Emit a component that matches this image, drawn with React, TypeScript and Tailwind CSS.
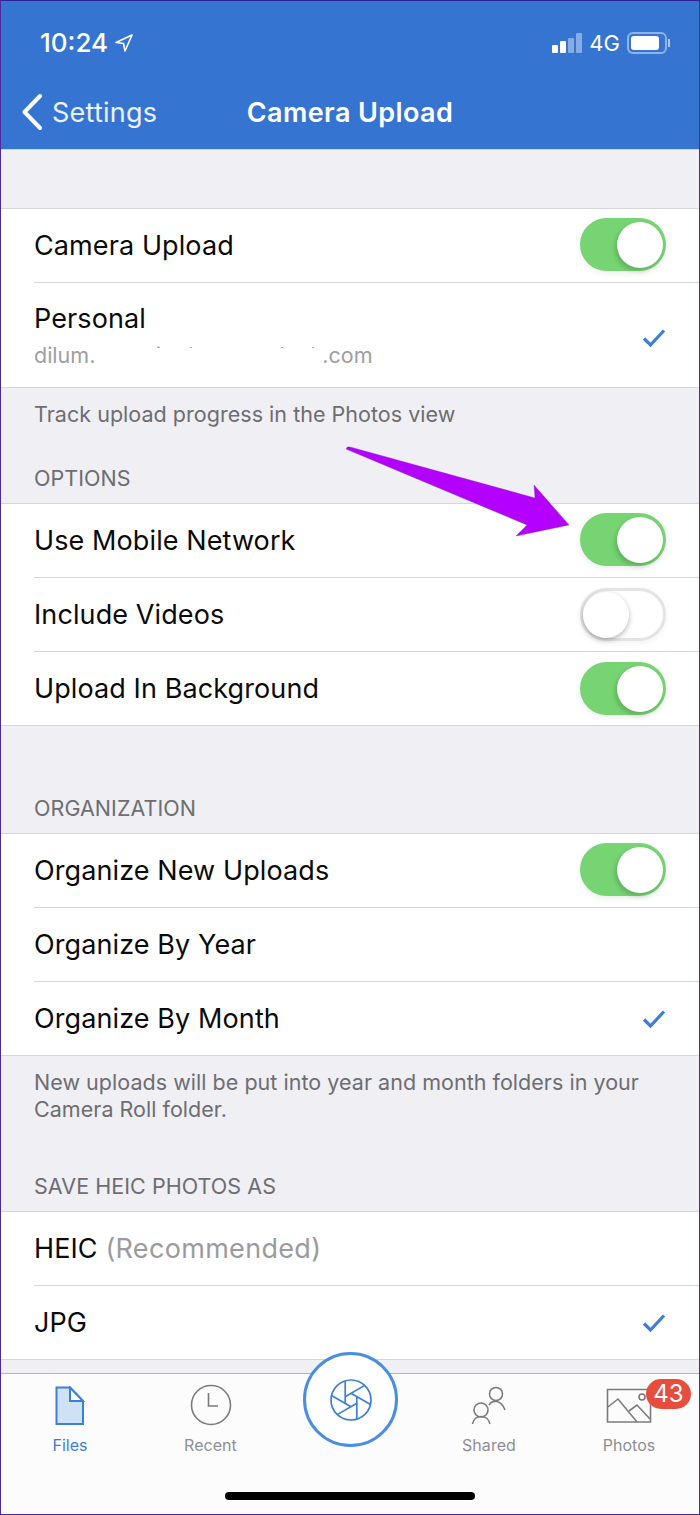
import type { ReactNode } from "react";

const FONT = "font-['Inter','Liberation_Sans',sans-serif]";

function Toggle({ on, lift }: { on: boolean; lift?: boolean }) {
  return (
    <div
      className={
        (lift ? "mb-[2px] " : "") +
        (on
          ? "w-[86px] h-[53px] rounded-full bg-[#76d572] flex items-center justify-end pr-[3px] shadow-[0_2px_6px_rgba(0,0,0,0.08)]"
          : "w-[86px] h-[53px] rounded-full bg-white border-[3px] border-[#e4e4e6] flex items-center justify-start shadow-[0_2px_6px_rgba(0,0,0,0.05)]")
      }
    >
      <div
        className={
          on
            ? "w-[46px] h-[46px] rounded-full bg-white shadow-[-2px_3px_5px_rgba(0,0,0,0.18)]"
            : "w-[46px] h-[46px] rounded-full bg-white shadow-[0_2px_5px_rgba(0,0,0,0.3)]"
        }
      />
    </div>
  );
}

function Check({ down }: { down?: boolean }) {
  return (
    <svg className={down ? "mt-[6px]" : ""} width="24" height="20" viewBox="0 0 24 20" fill="none">
      <path d="M2 10.5 L8.5 17 L22 2.5" stroke="#3b7fd9" strokeWidth="3.2" />
    </svg>
  );
}

function Row({ label, right, last }: { label: ReactNode; right?: ReactNode; last?: boolean }) {
  return (
    <div className="pl-[33px] bg-white">
      <div
        className={
          last
            ? "h-[73px] flex items-center justify-between pr-[33px]"
            : "h-[74px] flex items-center justify-between pr-[33px] border-b border-[#d6d6da]"
        }
      >
        <div className="pt-[2px] text-[27px] tracking-[0.1px] text-[#0b0b0b]">{label}</div>
        {right}
      </div>
    </div>
  );
}

function Group({ children }: { children: ReactNode }) {
  return <div className="border-t border-b border-[#d6d6da] bg-white">{children}</div>;
}

function SectionTitle({ children, h }: { children: ReactNode; h: string }) {
  return <div className={`${h} px-[33px] flex items-end pb-[9px] text-[21.5px] tracking-[0.05px] text-[#6d6d72] bg-[#efeff4]`}>{children}</div>;
}

function Note({ children, h }: { children: ReactNode; h: string }) {
  return <div className={`${h} px-[33px] pt-[13px] text-[21.5px] tracking-[0.03px] leading-[27px] text-[#6d6d72]`}>{children}</div>;
}

function StatusBar() {
  return (
    <div className="h-[77px] pl-[39px] pr-[29px] pt-[25px] flex justify-between items-start text-white">
      <div className="flex items-center gap-[7px]">
        <span className="text-[26px] leading-[34px] font-medium tracking-[0px]">10:24</span>
        <svg width="18" height="18" viewBox="0 0 18 18" fill="none">
          <path d="M17 1 L1 8.5 L8.5 9.5 L10 17 Z" stroke="white" strokeWidth="1.6" strokeLinejoin="round" />
        </svg>
      </div>
      <div className="flex items-center h-[34px]">
        <div className="flex items-end gap-[2px] h-[20px] mb-[1px]">
          <div className="w-[6px] h-[8px] bg-white rounded-[1px]" />
          <div className="w-[6px] h-[12px] bg-white rounded-[1px]" />
          <div className="w-[6px] h-[15px] bg-white/40 rounded-[1px]" />
          <div className="w-[6px] h-[20px] bg-white/40 rounded-[1px]" />
        </div>
        <span className="text-[22px] leading-[34px] ml-[7px]">4G</span>
        <div className="flex items-center ml-[7px]">
          <div className="w-[40px] h-[22px] border-2 border-white/45 rounded-[6px] pl-[2px] py-[2px] pr-[6px]">
            <div className="w-full h-full bg-white rounded-[3px]" />
          </div>
          <div className="w-[2px] h-[8px] bg-white/60 ml-[1px]" />
        </div>
      </div>
    </div>
  );
}

function NavBar() {
  return (
    <div className="h-[71px] flex items-center relative text-white">
      <div className="flex items-center pl-[20px] gap-[9px] pb-[4px]">
        <svg width="22" height="38" viewBox="0 0 22 38" fill="none">
          <path d="M19 3 L3.5 19 L19 35" stroke="white" strokeWidth="4" strokeLinecap="round" strokeLinejoin="round" />
        </svg>
        <span className="pt-[4px] text-[27px] tracking-[0.25px] text-white/90">Settings</span>
      </div>
      <div className="absolute left-0 right-0 text-center text-[27px] font-semibold tracking-[0.4px]">
        Camera Upload
      </div>
    </div>
  );
}

function FileIcon() {
  return (
    <svg width="30" height="40" viewBox="0 0 30 40" fill="none">
      <path d="M1.5 1.5 H15 L28 15 V38 H1.5 Z" fill="#cfe1f5" stroke="#3b7fd9" strokeWidth="2" />
      <path d="M15 1.5 V15 H28 Z" stroke="#3b7fd9" strokeWidth="2" fill="#ffffff" />
    </svg>
  );
}

function ClockIcon() {
  return (
    <svg className="-mt-[2px]" width="42" height="42" viewBox="0 0 42 42" fill="none" stroke="#7b7b7b" strokeWidth="1.6">
      <circle cx="21" cy="21" r="19.5" />
      <path d="M18.5 9 V22 H28" />
    </svg>
  );
}

function SharedIcon() {
  return (
    <svg width="36" height="40" viewBox="0 0 36 40" fill="none" stroke="#7b7b7b" strokeWidth="1.6">
      <circle cx="25" cy="8" r="6.5" />
      <path d="M18 19 C 21 14, 30 13, 34 24" />
      <circle cx="10" cy="24" r="7" />
      <path d="M1.5 38 C 3 28, 17 28, 19 38" />
    </svg>
  );
}

function PhotosIcon() {
  return (
    <svg width="46" height="36" viewBox="0 0 46 36" fill="none" stroke="#7b7b7b" strokeWidth="1.6">
      <path d="M1.5 1.5 H44.5 V34 H1.5 Z" />
      <path d="M2 19 L12 11 L31 34" />
      <path d="M23 23 L31 17 L44 31" />
      <circle cx="36" cy="9" r="3" />
    </svg>
  );
}

function ShutterIcon() {
  return (
    <svg width="44" height="44" viewBox="-22 -22 44 44" fill="none" stroke="#3b7fd9" strokeWidth="1.7">
      <circle cx="0" cy="0" r="20" />
      {[0, 60, 120, 180, 240, 300].map((deg) => (
        <path key={deg} d="M-5.8 -19.2 L-5.8 3.4" transform={`rotate(${deg})`} />
      ))}
    </svg>
  );
}

function Tab({ icon, label, active }: { icon: ReactNode; label: string; active?: boolean }) {
  return (
    <div className="w-[100px] flex flex-col items-center">
      <div className="h-[44px] flex items-center justify-center">{icon}</div>
      <div className={`text-[16px] tracking-[0.05px] leading-[20px] mt-[7px] ${active ? "text-[#3b7fd9]" : "text-[#8e8e93]"}`}>{label}</div>
    </div>
  );
}

function TabBar() {
  return (
    <div className="h-[141px] bg-[#fcfcfc] border-t border-[#b5b5b8] relative">
      <div className="flex justify-between pl-[19px] pr-[20px] pt-[10px]">
        <div className="flex gap-[40.5px]">
          <Tab icon={<FileIcon />} label="Files" active />
          <Tab icon={<ClockIcon />} label="Recent" />
        </div>
        <div className="flex gap-[40px]">
          <Tab icon={<SharedIcon />} label="Shared" />
          <div className="relative">
            <Tab icon={<PhotosIcon />} label="Photos" />
            <div className="absolute left-[67px] top-[-5px] w-[45px] h-[30px] rounded-full bg-[#e74c3c] text-white text-[24px] leading-[30px] text-center">
              43
            </div>
          </div>
        </div>
      </div>
      {/* capture button sits over the bar */}
      <div className="absolute left-[302px] top-[-22px] w-[95px] h-[95px] rounded-full bg-white border-[3px] border-[#4a8ee0] flex items-center justify-center">
        <ShutterIcon />
      </div>
      <div className="absolute left-[224px] bottom-[14px] w-[250px] h-[8px] rounded-full bg-black" />
    </div>
  );
}

export default function App() {
  return (
    <div className={`${FONT} relative w-[700px] h-[1515px] overflow-hidden flex flex-col bg-[#efeff4] border-x border-b border-[#4b2a9c]`}>
      <div className="bg-[#3575d1] border-t border-[#2f1f9a]">
        <StatusBar />
        <NavBar />
      </div>
      <div className="flex-1 overflow-hidden border-t border-[#d6d6da]">
        <div className="h-[58px]" />
        <Group>
          <Row label="Camera Upload" right={<Toggle on lift />} />
          <div className="pl-[33px] bg-white h-[104px] flex items-center justify-between pr-[33px]">
            <div>
              <div className="text-[27px] leading-[34px] tracking-[0.1px] text-[#0b0b0b]">Personal</div>
              <div className="relative text-[21.5px] leading-[28px] mt-[5px] text-[#9e9ea1] w-[345px]">
                dilum.senavirathne@outlook.com
                <div className="absolute left-[61px] top-[7px] w-[229px] h-[21px] bg-white" />
              </div>
            </div>
            <Check down />
          </div>
        </Group>
        <Note h="h-[66px]">Track upload progress in the Photos view</Note>
        <SectionTitle h="h-[49px]">OPTIONS</SectionTitle>
        <Group>
          <Row label="Use Mobile Network" right={<Toggle on lift />} />
          <Row label="Include Videos" right={<Toggle on={false} />} />
          <Row label="Upload In Background" right={<Toggle on />} last />
        </Group>
        <SectionTitle h="h-[107px]">ORGANIZATION</SectionTitle>
        <Group>
          <Row label="Organize New Uploads" right={<Toggle on lift />} />
          <Row label="Organize By Year" />
          <Row label="Organize By Month" right={<Check />} last />
        </Group>
        <Note h="h-[93px]">
          New uploads will be put into year and month folders in your
          <br />
          Camera Roll folder.
        </Note>
        <SectionTitle h="h-[62px]">SAVE HEIC PHOTOS AS</SectionTitle>
        <Group>
          <Row
            label={
              <>
                HEIC <span className="text-[#9b9b9f] tracking-[0.32px]">(Recommended)</span>
              </>
            }
          />
          <Row label="JPG" right={<Check />} last />
        </Group>
      </div>
      <TabBar />
      {/* annotation arrow drawn on top of the screenshot */}
      <svg className="absolute -left-px top-0 pointer-events-none" width="700" height="600" viewBox="0 0 700 600">
        <path d="M346 449 Q347 446 350 447 L535 498 L534 485 L569 525 L516 536 L527 525 Z" fill="#b400ff" stroke="#7a3a9a" strokeWidth="0.4" />
      </svg>
    </div>
  );
}
